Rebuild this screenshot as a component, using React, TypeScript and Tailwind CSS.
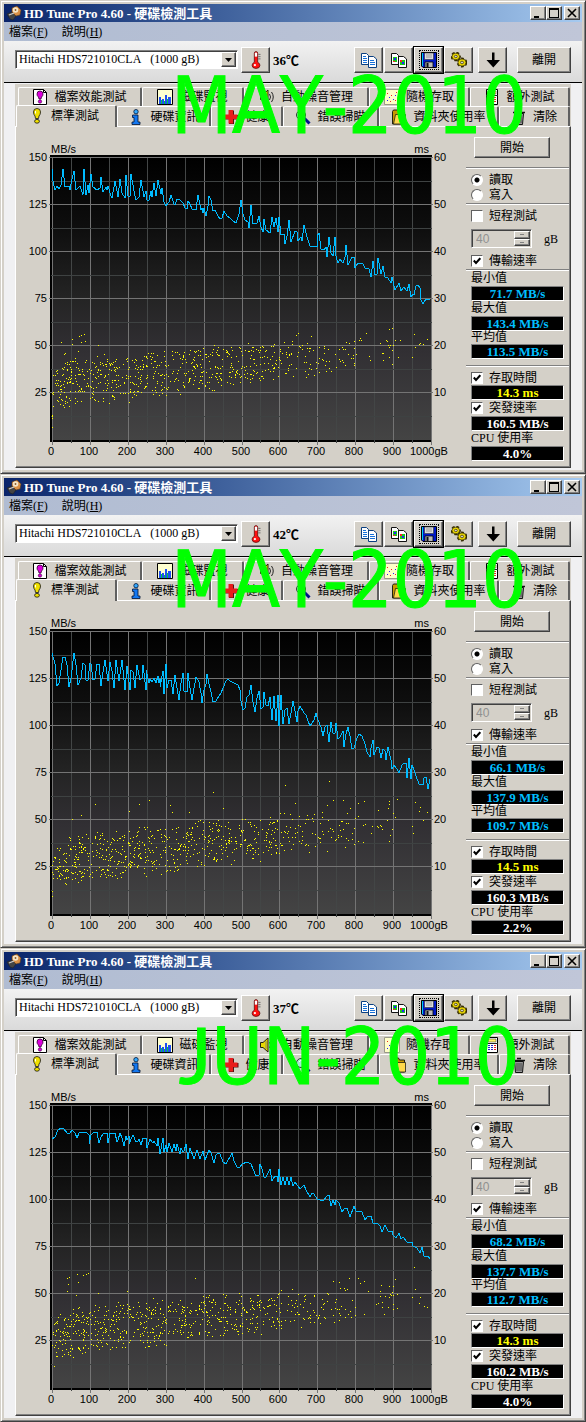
import { type ReactNode } from "react";

type Pair = [number, number];

interface Run {
  caption: ReactNode;
  temperature: string;
  min: string;
  max: string;
  avg: string;
  access: string;
  burst: string;
  cpu: string;
  seed: number;
  /** y of the 150 MB/s line in trace units (a third of a pixel) */
  top: number;
  /** lower and upper edge of the access-time cloud and how fast it rises */
  cloud: [number, number, number];
  left: string;
  right: string;
  strays: string;
}

const runs: Run[] = [
  {
    caption: "MAY-2010",
    temperature: "36℃",
    min: "71.7 MB/s",
    max: "143.4 MB/s",
    avg: "113.5 MB/s",
    access: "14.3 ms",
    burst: "160.5 MB/s",
    cpu: "4.0%",
    seed: 11,
    top: 52,
    cloud: [812, 695, 90],
    left: "157,87 160,125 166,150 172,138 178,149 184,137 190,88 196,141 207,140 211,151 217,118 223,94 229,151 236,142 241,139 248,165 253,88 259,165 265,136 268,161 274,103 280,141 292,151 299,146 304,112 310,158 317,141 321,152 325,138 333,170 337,175 344,124 350,154 355,172 361,118 367,160 374,175 379,106 384,168 389,170 394,103 401,155 407,181 418,172 424,121 431,171 437,154 441,181 446,181 452,155 457,171 463,129 468,168 475,121 482,164 487,145 493,186 498,198 508,187 514,167 521,193 526,197 532,178 541,181 549,190 554,204 560,208 565,184 571,194 577,207 589,211 595,167 602,210 606,206 608,221 611,205 617,228 624,198 628,169 634,182 640,213 646,211 653,229 659,238 665,234 672,214 680,229 690,235 700,243",
    right: "18,249 26,222 34,181 40,223 46,241 53,246 58,265 64,195 70,253 80,250 88,230 92,262 98,276 103,239 109,270 120,280 127,232 133,262 139,234 145,278 148,232 154,286 161,282 166,313 172,289 178,241 184,307 195,275 200,276 205,304 212,292 217,304 223,257 232,291 241,319 256,320 260,320 262,290 267,281 274,328 282,330 288,322 292,352 298,292 304,340 310,349 316,292 319,350 325,371 331,357 338,371 344,353 349,316 355,376 365,353 372,352 376,384 385,371 400,373 406,386 416,389 424,411 430,364 434,405 440,402 445,355 452,403 458,380 466,411 475,414 482,430 487,412 496,451 507,430 514,455 522,443 532,455 538,433 544,472 548,462 553,466 558,440 565,436 571,446 574,480 578,493 587,479 600,478",
    strays: "184,607 215,613 217,598 233,634 238,589 243,586 253,583 256,604 242,607 193,643 196,640 295,616 157,826 157,830 157,834 157,862 1168,568 1177,566 1165,616 1170,616 1180,616 1243,583 1282,598 1261,610 1258,613 1246,622 1186,601 1235,652 1193,652 1168,652 1147,640 1099,580 1081,595 895,580 889,586 934,589",
  },
  {
    caption: "MAY-2010",
    temperature: "42℃",
    min: "66.1 MB/s",
    max: "137.9 MB/s",
    avg: "109.7 MB/s",
    access: "14.5 ms",
    burst: "160.3 MB/s",
    cpu: "2.2%",
    seed: 29,
    top: 64,
    cloud: [832, 732, 132],
    left: "157,129 166,163 172,228 178,220 184,180 190,143 196,142 202,165 208,233 214,205 223,130 229,165 235,227 243,205 250,160 254,165 259,210 265,210 271,160 274,163 280,210 286,208 292,164 298,164 304,229 309,188 316,150 325,213 331,157 337,185 343,236 349,152 356,213 367,150 374,240 382,170 389,240 394,180 399,187 404,234 412,167 421,211 425,206 430,167 437,240 439,180 446,220 451,208 457,218 463,205 468,220 473,199 477,220 481,207 481,232 488,185 493,254 497,164 502,234 507,210 514,210 520,253 526,196 532,234 538,272 544,221 549,191 553,244 560,247 565,189 571,236 577,271 589,203 597,218 602,250 607,280 612,240 617,222 622,193 627,224 633,247 640,276 647,273 656,258 664,250 668,235 677,214 685,208",
    right: "0,213 18,222 25,226 29,241 34,275 40,301 46,296 52,261 58,255 64,226 70,277 76,308 82,264 88,243 92,298 98,293 103,248 109,286 114,290 121,262 127,330 133,258 139,333 145,256 148,348 154,255 160,344 166,301 172,295 178,344 184,310 190,275 196,305 202,337 205,303 211,290 222,309 229,317 235,334 241,349 251,330 259,309 265,331 274,353 280,380 286,353 292,346 298,397 304,337 309,370 315,369 319,340 325,387 331,382 338,364 343,412 349,372 355,352 361,380 367,418 373,415 380,384 388,374 397,380 406,402 412,427 419,442 424,415 430,390 433,437 440,412 446,414 452,446 458,417 464,424 469,451 475,412 482,452 487,477 493,466 500,478 508,491 517,467 523,459 528,461 532,505 538,446 544,508 546,465 552,481 559,500 566,523 578,525 583,504 588,503 595,538 600,507",
    strays: "640,547 448,571 286,583 418,583 511,586 244,616 215,628 388,604 568,607 670,595 517,607 157,844 157,859 988,514 856,526 1000,571 1030,571 886,580 982,586 1075,580 1093,574 1168,574 1168,583 1192,568 1165,595 1246,577 1261,592 1258,604 1282,607 1180,610 1186,622 1235,649 1147,658 1177,658 1168,694",
  },
  {
    caption: (
      <>
        <span className="font-['Lato',sans-serif]">J</span>UN-2010
      </>
    ),
    temperature: "37℃",
    min: "68.2 MB/s",
    max: "137.7 MB/s",
    avg: "112.7 MB/s",
    access: "14.3 ms",
    burst: "160.2 MB/s",
    cpu: "4.0%",
    seed: 53,
    top: 46,
    cloud: [812, 698, 98],
    left: "157,147 166,141 175,121 184,115 192,117 200,129 209,129 217,121 224,130 230,145 238,131 247,127 262,130 266,136 268,163 274,135 281,128 292,128 298,161 304,141 311,130 322,130 325,160 330,130 345,129 350,157 355,152 360,131 367,145 373,170 379,138 382,152 387,140 388,163 394,149 400,137 407,158 413,154 418,147 424,167 430,146 437,145 440,176 446,158 451,149 459,159 463,153 470,170 475,145 481,193 488,145 493,188 498,166 502,186 508,160 515,188 521,162 527,184 532,163 539,194 544,175 550,186 553,185 559,163 565,208 571,176 583,207 590,180 601,208 608,184 616,212 628,181 634,190 641,221 649,197 655,189 661,193 668,218 677,222 685,211",
    right: "0,202 7,190 13,215 22,232 30,232 36,222 50,217 64,223 70,237 77,260 88,257 91,222 97,239 103,262 108,262 121,239 127,275 134,260 140,258 145,278 148,238 154,286 160,263 166,286 172,263 178,286 184,263 190,290 195,276 205,288 211,298 222,287 229,302 240,322 246,309 253,312 260,329 270,331 283,330 290,318 296,316 304,349 309,331 316,346 319,331 328,340 337,367 345,354 352,355 361,382 373,348 378,363 397,366 406,392 413,380 424,380 430,400 445,403 451,410 457,427 464,407 474,424 487,425 490,435 497,446 507,431 514,447 520,443 530,456 545,458 550,469 562,475 571,490 577,472 583,498 595,498 600,507",
    strays: "202,565 208,562 232,553 235,577 250,556 259,553 265,550 205,583 202,604 229,616 295,610 382,604 586,565 163,829 1243,532 1186,568 1048,565 1075,565 1000,574 1018,577 1093,574 1081,580 1168,589 1180,589 1177,607 1192,613 1168,622 1165,652 1192,655 1235,622 1246,598 1261,622 1258,640 1282,652 1147,637",
  },
];

const parse = (s: string, dx = 0): Pair[] =>
  s.split(" ").map((p) => {
    const [x, y] = p.split(",").map(Number);
    return [x + dx, y];
  });

function tracePoints(run: Run) {
  return [...parse(run.left), ...parse(run.right, 690)]
    .map(([x, y]) => `${Math.round(x / 3)},${Math.round((y - run.top) / 3) + 157}`)
    .join(" ");
}

function cloudPath(run: Run) {
  let s = run.seed * 7919;
  const rand = () => {
    s = (s * 1103515245 + 12345) % 2147483648;
    return s / 2147483648;
  };
  const perBand = [125, 110, 104, 90, 92, 80, 46, 38, 14, 2];
  const [low, high, rise] = run.cloud;
  const dots: Pair[] = parse(run.strays);
  perBand.forEach((count, band) => {
    for (let i = 0; i < count; i++) {
      const t = (band + rand()) / 10;
      const bottom = low + 6 - 150 * t;
      const topEdge = high - 24 - rise * Math.sqrt(t);
      const depth = (rand() + rand() * 0.25) / 1.25;
      dots.push([157 + t * 1137, topEdge + depth * (bottom - topEdge)]);
    }
  });
  return dots
    .map(([x, y]) => `M${Math.round(x / 3)} ${Math.round((y - run.top) / 3) + 157}h1v1h-1z`)
    .join("");
}

const steps = Array.from({ length: 21 }, (_, i) => i);

function Chart({ run, id }: { run: Run; id: number }) {
  const gx = (i: number) => Math.round(52 + i * 18.95);
  const gy = (i: number) => Math.round(157 + i * 23.5);
  return (
    <svg
      viewBox="16 127 448 340"
      className="block h-auto w-full font-['Liberation_Sans',sans-serif]"
      role="img"
      aria-label="Transfer rate and access time"
    >
      <defs>
        <linearGradient id={`plot${id}`} x1="0" x2="0" y1="0" y2="1">
          <stop offset="0" stopColor="#000" />
          <stop offset="0.25" stopColor="#0e0e0e" />
          <stop offset="0.5" stopColor="#242424" />
          <stop offset="0.68" stopColor="#312f33" />
          <stop offset="1" stopColor="#444" />
        </linearGradient>
      </defs>
      <g shapeRendering="crispEdges">
        <rect x="50" y="155" width="382" height="287" fill="#000" />
        <rect x="52" y="157" width="379" height="283" fill={`url(#plot${id})`} />
        {steps.map((i) => (
          <rect key={i} x={gx(i)} y="157" width="1" height={i % 2 ? 286 : 288} fill={i % 2 ? "#434646" : "#747474"} />
        ))}
        {steps.slice(0, 12).map((i) => (
          <rect key={i} x={i % 2 ? 51 : 49} y={gy(i)} width={i % 2 ? 381 : 384} height="1" fill={i % 2 ? "#3e4242" : "#747474"} />
        ))}
        <polyline points={tracePoints(run)} fill="none" stroke="#0bf" strokeWidth="1" />
        <path d={cloudPath(run)} fill="#ff0" />
      </g>
      <g fontSize="11" fill="#000">
        <text x="51" y="153">MB/s</text>
        <text x="429" y="153" textAnchor="end">ms</text>
        {[150, 125, 100, 75, 50, 25].map((v, i) => (
          <text key={v} x="47" y={161 + i * 47} textAnchor="end">{v}</text>
        ))}
        {[60, 50, 40, 30, 20, 10].map((v, i) => (
          <text key={v} x="434" y={161 + i * 47}>{v}</text>
        ))}
        {[0, 100, 200, 300, 400, 500, 600, 700, 800, 900].map((v, i) => (
          <text key={v} x={Math.round(51 + i * 37.9)} y="455" textAnchor="middle">{v}</text>
        ))}
        <text x="410" y="455">1000gB</text>
      </g>
    </svg>
  );
}

/* ---------- icons ---------- */

function Icon({ children, className = "size-4" }: { children: ReactNode; className?: string }) {
  return (
    <svg viewBox="0 0 16 16" className={`shrink-0 ${className}`} aria-hidden="true">
      {children}
    </svg>
  );
}

const AppIcon = () => (
  <Icon>
    <path d="M1 9l5-2 4 4-3 4-3-1z" fill="#444" stroke="#222" strokeWidth=".6" />
    <path d="M6 3l5-2 4 4-1 5-4 1-4-4z" fill="#d98f45" stroke="#5a3a1a" strokeWidth=".6" />
    <circle cx="9.500" cy="5" r="2.800" fill="#f6e6c8" />
    <circle cx="9.500" cy="5" r=".9" fill="#8a5a2a" />
    <path d="M3 10l5-2" stroke="#ccc" strokeWidth="1.200" />
  </Icon>
);

const FileBang = () => (
  <Icon>
    <path d="M1.500.5h10l3 3v12h-13z" fill="#fff" stroke="#000" />
    <path d="M11.500.5v3h3" fill="none" stroke="#000" />
    <path d="M5 5q0-3 3-3t3 3q0 2-1.500 3L9 10H7l-.5-2Q5 7 5 5z" fill="#d0d" stroke="#303" strokeWidth=".8" />
    <circle cx="8" cy="12.500" r="1.700" fill="#d0d" stroke="#303" strokeWidth=".6" />
  </Icon>
);
const Monitor = () => (
  <Icon>
    <path d="M.5.500h15v15H.5z" fill="#ffffd0" stroke="#000" />
    <path d="M2 15V8h2v7zM5 15v-5h2v5zM8 15V6h2v9zM11 15V8h3v7z" fill="#2050f0" />
    <path d="M4 15v-4h1v4zM7 15v-3h1v3zM10 15v-5h1v5z" fill="#0c4" />
  </Icon>
);
const Speaker = () => (
  <Icon>
    <path d="M1.500 5.500H4L9 1v14l-5-4.500H1.500z" fill="#e8d800" stroke="#221" />
    <path d="M7 4v8" stroke="#886" />
    <path d="M10.500 5q2 3 0 6M12.500 3q3.500 5 0 10" fill="none" stroke="#222" />
  </Icon>
);
const Dots = () => (
  <Icon>
    <path d="M.5.500h15v15H.5z" fill="#ffffc8" stroke="#998" />
    <path d="M3 11h1v1H3zM5 8h1v1H5zM9 10h1v1H9zM11 6h1v1h-1z" fill="#22f" />
    <path d="M3 4h1v1H3zM7 6h1v1H7zM11 11h1v1h-1zM6 12h1v1H6zM12 3h1v1h-1z" fill="#e22" />
  </Icon>
);
const Calc = () => (
  <Icon>
    <path d="M2.500.5h11v15h-11z" fill="#fff" stroke="#000" />
    <path d="M4 2h8v3H4z" fill="#fff066" stroke="#333" strokeWidth=".5" />
    <path d="M4 8h2v1H4zM7 8h2v1H7zM4 10h2v1H4zM7 10h2v1H7zM4 12h2v1H4zM7 12h2v1H7z" fill="#22c" />
    <path d="M10 8h2v1h-2zM10 10h2v1h-2zM10 12h2v1h-2z" fill="#e22" />
    <path d="M2 6.500h12" stroke="#222" />
  </Icon>
);
const BangTab = () => (
  <Icon>
    <path d="M4.500 4q0-3.500 3.500-3.500T11.500 4q0 2.500-1.500 4l-.5 2.500h-3L6 8Q4.500 6.500 4.500 4z" fill="#f0e000" stroke="#111" strokeWidth=".8" />
    <ellipse cx="8" cy="13.300" rx="2.400" ry="1.900" fill="#f0e000" stroke="#111" strokeWidth=".8" />
    <path d="M6.500 3v2.500" stroke="#fff" />
  </Icon>
);
const Info = () => (
  <Icon>
    <circle cx="8" cy="2.700" r="2.200" fill="#3af" stroke="#013" strokeWidth=".8" />
    <path d="M4.500 6h5.500v7h2v2.500H4V13h2V8.500H4.500z" fill="#1478f0" stroke="#013" strokeWidth=".8" />
  </Icon>
);
const Cross = () => (
  <Icon>
    <path d="M6 1.500h5v4.500h4.500v4.500H11V15H6v-4.500H1.500V6H6z" fill="#511" />
    <path d="M5.500 1h4.500v4.500H14.500V10H10v4.500H5.500V10H1V5.500h4.500z" fill="#e81c1c" />
  </Icon>
);
const Lens = () => (
  <Icon>
    <path d="M9 9l5.500 5.500" stroke="#00128a" strokeWidth="3" />
    <circle cx="6" cy="6" r="4.500" fill="#a8e8d0" stroke="#333" />
    <path d="M4 5q1-2 3-1.500" fill="none" stroke="#fff" />
  </Icon>
);
const Folder = () => (
  <Icon>
    <path d="M1.500 2.500l1-1.500h5l1 2h5v12h-12z" fill="#c89800" stroke="#221" />
    <path d="M4.500 5.500h10v9.500h-12z" fill="#ffd84a" stroke="#221" strokeWidth=".8" />
  </Icon>
);
const Trash = () => (
  <Icon>
    <path d="M3.500 4.500h9l-1 11h-7z" fill="#999" stroke="#111" />
    <path d="M2 3.500h12M6 1.500h4" stroke="#111" strokeWidth="1.500" />
    <path d="M6 6v8M8 6v8M10 6v8" stroke="#444" />
  </Icon>
);
const Thermo = () => (
  <Icon className="h-[18px] w-[18px]">
    <path d="M6.500 10V2q0-1.500 1.500-1.500T9.500 2v8q2 1 2 2.700Q11.500 15.500 8 15.500T4.500 12.700Q4.500 11 6.500 10z" fill="#f11" stroke="#400" strokeWidth=".6" />
    <path d="M7 1.500h2V5H7z" fill="#fff" />
    <path d="M10 3h2M10 5h2M10 7h2" stroke="#555" strokeWidth=".7" />
    <circle cx="7" cy="12.500" r="1" fill="#fff" />
  </Icon>
);

const Pages = ({ picture = false }: { picture?: boolean }) => (
  <Icon>
    <path d="M.5 1.500h5l2 2v9h-7zM7.500 4.500h5l3 2.500v8.500h-8z" fill="#fff" stroke={picture ? "#111" : "#0a3f80"} />
    {picture ? (
      <>
        <path d="M2 5h4v5H2zM9 8h5v5H9z" fill="#19c819" />
        <path d="M3 6h2v2H3zM11 10h2v2h-2z" fill="#22f" />
        <path d="M2 9h2v1H2zM9 8h2v2H9z" fill="#f22" />
      </>
    ) : (
      <path d="M2 4.500h3M2 6.500h4M2 8.500h4M2 10.500h4M9 8.500h4M9 10.500h5M9 12.500h5" stroke="#1670d8" />
    )}
  </Icon>
);
const Floppy = () => (
  <Icon>
    <path d="M.5.500h15v15H2L.5 14z" fill="#0018c8" stroke="#000" />
    <path d="M3.500 1h9v6.500h-9z" fill="#ddd" stroke="#333" strokeWidth=".6" />
    <path d="M5 3h6M5 5h6" stroke="#888" strokeWidth=".8" />
    <path d="M4 10h8v5.500H4z" fill="#bbb" stroke="#000" strokeWidth=".8" />
    <path d="M5.500 11h2v4h-2z" fill="#111" />
    <path d="M1.500 1v13" stroke="#0ce" strokeWidth="1" />
  </Icon>
);
const Gears = () => (
  <Icon>
    <g fill="none" stroke="#332b00" strokeWidth="5" strokeDasharray="1.800 1.100">
      <ellipse cx="4.800" cy="4.500" rx="2.600" ry="2.300" />
      <ellipse cx="11" cy="10.500" rx="2.800" ry="2.500" />
    </g>
    <g fill="#f0dc00" stroke="#332b00" strokeWidth=".7">
      <ellipse cx="4.800" cy="4.500" rx="3.800" ry="3.300" />
      <ellipse cx="11" cy="10.500" rx="4" ry="3.600" />
    </g>
    <g fill="#d4d0c8" stroke="#332b00" strokeWidth=".7">
      <ellipse cx="4.800" cy="4.500" rx="1.500" ry="1.200" />
      <ellipse cx="11" cy="10.500" rx="1.600" ry="1.300" />
    </g>
  </Icon>
);
const Down = () => (
  <Icon>
    <path d="M7 .5h2.500V8H15l-6.700 7.500L1.500 8H7z" fill="#000" />
  </Icon>
);

/* ---------- controls ---------- */

const raised =
  "border border-t-white border-l-white border-r-[#404040] border-b-[#404040] bg-[#d4d0c8] shadow-[inset_-1px_-1px_0_#808080]";
const sunken =
  "border border-t-[#808080] border-l-[#808080] border-r-white border-b-white";

function TitleButton({ label, children }: { label: string; children: ReactNode }) {
  return (
    <button aria-label={label} className={`flex h-3.5 w-4 items-center justify-center ${raised}`}>
      <svg viewBox="0 0 10 10" className="size-2.5" aria-hidden="true" shapeRendering="crispEdges">
        {children}
      </svg>
    </button>
  );
}

function ToolButton({ label, className = "", children }: { label: string; className?: string; children: ReactNode }) {
  return (
    <button aria-label={label} className={`flex h-[26px] w-[29px] shrink-0 items-center justify-center ${raised} ${className}`}>
      {children}
    </button>
  );
}

function Tab({ icon, children, active = false }: { icon: ReactNode; children: ReactNode; active?: boolean }) {
  return (
    <button
      role="tab"
      aria-selected={active}
      className={`flex min-w-0 items-center justify-center gap-1.5 whitespace-nowrap rounded-t-xs border-t border-r-2 border-l border-t-white border-r-[#606060] border-l-white bg-[#d4d0c8] ${
        active ? "relative -mt-px -mb-px pr-1 pb-0.5" : ""
      }`}
    >
      {icon}
      <span>{children}</span>
    </button>
  );
}

function Check({ label, checked = false, className = "" }: { label: string; checked?: boolean; className?: string }) {
  return (
    <label className={`ml-[5px] flex items-center gap-1.5 ${className}`}>
      <span className="grid size-3 place-items-center">
        <input
          type="checkbox"
          defaultChecked={checked}
          className="peer col-start-1 row-start-1 size-3 appearance-none border border-t-[#606060] border-l-[#606060] border-r-white border-b-white bg-white"
        />
        <svg viewBox="0 0 8 8" className="pointer-events-none invisible col-start-1 row-start-1 size-2 peer-checked:visible" aria-hidden="true">
          <path d="M.8 3.500L3 6l4.300-4.800" fill="none" stroke="#000" strokeWidth="2" />
        </svg>
      </span>
      {label}
    </label>
  );
}

function Radio({ label, name, checked = false }: { label: string; name: string; checked?: boolean }) {
  return (
    <label className="ml-[5px] flex h-[15px] items-center gap-1.5">
      <input
        type="radio"
        name={name}
        defaultChecked={checked}
        className="size-3 appearance-none rounded-full border border-t-[#606060] border-l-[#606060] border-r-white border-b-white bg-white checked:bg-[radial-gradient(circle,#000_2px,#fff_3px)]"
      />
      {label}
    </label>
  );
}

const Rule = ({ className = "" }: { className?: string }) => (
  <hr className={`h-0.5 border-t border-b border-t-[#808080] border-b-white ${className}`} />
);

function Readout({ color, children }: { color: string; children: ReactNode }) {
  return (
    <output className={`mr-[5px] ml-[5px] flex h-[15px] items-center justify-center bg-black text-[13px] leading-none font-bold ${sunken} ${color}`}>
      {children}
    </output>
  );
}

function HdTune({ run, id }: { run: Run; id: number }) {
  return (
    <section className="relative border border-t-[#d4d0c8] border-l-[#d4d0c8] border-r-[#404040] border-b-[#404040] bg-[#d4d0c8] p-[3px] shadow-[inset_1px_1px_0_#fff,inset_-1px_-1px_0_#808080]">
      <header className="flex h-[18px] items-center bg-linear-to-r from-[#0a246a] to-[#a6caf0] pr-0.5 pl-0.5 text-white">
        <AppIcon />
        <h1 className="ml-0.5 flex-1 text-[13px] font-bold whitespace-nowrap">HD Tune Pro 4.60 - 硬碟檢測工具</h1>
        <TitleButton label="Minimize">
          <path d="M1 8h5v2H1z" fill="#000" />
        </TitleButton>
        <TitleButton label="Maximize">
          <path d="M0 0h10v10H0zM1 2v7h8V2z" fill="#000" fillRule="evenodd" />
        </TitleButton>
        <span className="w-0.5" />
        <TitleButton label="Close">
          <path d="M1 1l8 8M9 1l-8 8" stroke="#000" strokeWidth="1.600" shapeRendering="auto" />
        </TitleButton>
      </header>

      <nav className="flex h-[19px] items-center gap-3.5 bg-linear-to-r from-[#b0bcd2] to-[#c0c6d8] pl-[5px]">
        <button>檔案(<u>F</u>)</button>
        <button>說明(<u>H</u>)</button>
      </nav>

      <div className="flex h-[42px] items-start border-b border-black bg-linear-to-b from-[#f2f2f2] to-[#dadada] px-[11px] pt-1.5">
        <div className={`relative mt-[3px] h-[19px] w-[223px] bg-white ${sunken} shadow-[inset_1px_1px_0_#404040]`}>
          <select
            aria-label="Drive"
            className="block h-full w-full appearance-none pl-[3px] text-[12px] leading-[17px]"
          >
            <option>{"Hitachi HDS721010CLA\u00a0\u00a0 (1000 gB)"}</option>
          </select>
          <span className={`pointer-events-none absolute top-px right-px bottom-px flex w-[15px] items-center justify-center ${raised}`}>
            <svg viewBox="0 0 7 4" className="h-1 w-[7px]" aria-hidden="true">
              <path d="M0 0h7L3.500 4z" />
            </svg>
          </span>
        </div>
        <ToolButton label="Temperature" className="ml-[3px]">
          <Thermo />
        </ToolButton>
        <span className="ml-[3px] flex h-[26px] items-center text-[13px] font-bold">{run.temperature}</span>
        <div className="ml-auto flex gap-px">
          <ToolButton label="Copy text"><Pages /></ToolButton>
          <ToolButton label="Copy screenshot"><Pages picture /></ToolButton>
          <ToolButton label="Save" className="outline outline-black">
            <span className="border border-dotted border-black p-px"><Floppy /></span>
          </ToolButton>
          <ToolButton label="Options"><Gears /></ToolButton>
          <ToolButton label="Minimize to tray" className="ml-1"><Down /></ToolButton>
        </div>
        <button className={`ml-2.5 h-[26px] w-[54px] ${raised}`}>離開</button>
      </div>

      <div className="bg-[#f0f0f2] px-[11px] pt-px pb-0.5">
        <div className="bg-[#d4d0c8] pt-[3px]">
          <div role="tablist">
            <div className="ml-[3px] mr-px grid h-[19px] grid-cols-[124fr_102fr_125fr_101fr_100fr]">
              <Tab icon={<FileBang />}>檔案效能測試</Tab>
              <Tab icon={<Monitor />}>磁碟監視</Tab>
              <Tab icon={<Speaker />}>自動噪音管理</Tab>
              <Tab icon={<Dots />}>隨機存取</Tab>
              <Tab icon={<Calc />}>額外測試</Tab>
            </div>
            <div className="mr-px ml-px grid h-5 grid-cols-[101fr_94fr_72fr_96fr_120fr_71fr]">
              <Tab icon={<BangTab />} active>標準測試</Tab>
              <Tab icon={<Info />}>硬碟資訊</Tab>
              <Tab icon={<Cross />}>健康</Tab>
              <Tab icon={<Lens />}>錯誤掃瞄</Tab>
              <Tab icon={<Folder />}>資料夾使用率</Tab>
              <Tab icon={<Trash />}>清除</Tab>
            </div>
          </div>

          <div className="flex border-t border-r border-b border-l border-t-white border-r-[#404040] border-b-[#404040] border-l-white pr-px shadow-[inset_-1px_-1px_0_#808080]">
            <div className="min-w-0 flex-1">
              <Chart run={run} id={id} />
            </div>
            <aside className="ml-0.5 w-[103px] shrink-0 pt-2.5 leading-none">
              <button className={`ml-2 h-[21px] w-[76px] ${raised}`}>開始</button>
              <Rule className="mt-[9px]" />
              <div className="mt-[3px]">
                <Radio name={`mode${id}`} label="讀取" checked />
                <Radio name={`mode${id}`} label="寫入" />
              </div>
              <Rule className="mt-px" />
              <Check label="短程測試" className="mt-1 h-3.5" />
              <label className="mt-1.5 ml-[5px] flex h-[19px] items-center gap-3">
                <span className={`flex h-full w-[61px] items-stretch ${sunken} shadow-[inset_1px_1px_0_#404040]`}>
                  <input disabled defaultValue="40" className="w-full min-w-0 pl-1 font-['Liberation_Sans',sans-serif] text-[12px] text-[#909090]" />
                  <span className="my-px mr-px flex w-4 shrink-0 flex-col">
                    <span className={`flex flex-1 items-center justify-center ${raised}`}>
                      <span className="h-px w-1 bg-[#808080]" />
                    </span>
                    <span className={`flex flex-1 items-center justify-center ${raised}`}>
                      <span className="h-px w-1 bg-[#808080]" />
                    </span>
                  </span>
                </span>
                gB
              </label>
              <Check label="傳輸速率" checked className="mt-1.5 h-3.5" />
              <Rule className="mt-px" />
              <p className="ml-[5px] h-[15px] leading-[15px]">最小值</p>
              <Readout color="text-[#00bfff]">{run.min}</Readout>
              <p className="ml-[5px] h-[15px] leading-[15px]">最大值</p>
              <Readout color="text-[#00bfff]">{run.max}</Readout>
              <p className="ml-[5px] h-[13px] leading-[13px]">平均值</p>
              <Readout color="text-[#00bfff]">{run.avg}</Readout>
              <Rule className="mt-1.5" />
              <Check label="存取時間" checked className="mt-[3px] h-[15px]" />
              <Readout color="text-[#ffff00]">{run.access}</Readout>
              <Check label="突發速率" checked className="h-4" />
              <Readout color="text-white">{run.burst}</Readout>
              <p className="ml-[5px] h-[15px] leading-[15px] whitespace-nowrap">CPU 使用率</p>
              <Readout color="text-white">{run.cpu}</Readout>
            </aside>
          </div>
        </div>
      </div>

      <p className="pointer-events-none absolute top-[66px] right-0 left-[112px] text-center font-['DejaVu_Sans_Condensed','DejaVu_Sans',sans-serif] text-[78px] leading-none whitespace-nowrap text-[#00ff00] [font-kerning:none] [-webkit-text-stroke:1px_#00ff00]">
        {run.caption}
      </p>
    </section>
  );
}

export default function App() {
  return (
    <main className="bg-[#d4d0c8] font-['Liberation_Serif','Noto_Sans_CJK_TC',serif] text-[12px] leading-none text-black">
      {runs.map((run, i) => (
        <HdTune key={i} run={run} id={i} />
      ))}
    </main>
  );
}
